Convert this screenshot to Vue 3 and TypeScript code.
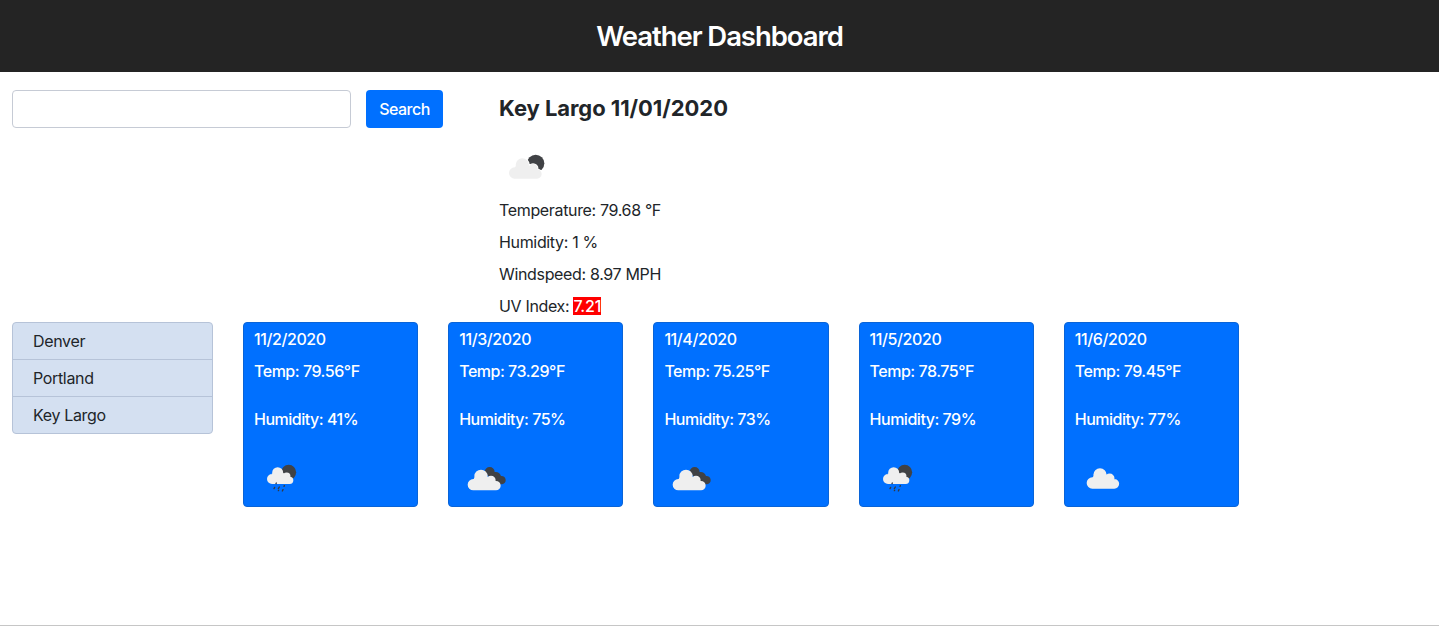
<script setup lang="ts">
type Icon = 'rain' | 'broken' | 'cloud'
interface Day { date: string; temp: string; humidity: number; icon: Icon }
type Puff = [x: number, y: number, r: number]

const cities: string[] = ['Denver', 'Portland', 'Key Largo']
const days: Day[] = [
  { date: '11/2/2020', temp: '79.56', humidity: 41, icon: 'rain' },
  { date: '11/3/2020', temp: '73.29', humidity: 75, icon: 'broken' },
  { date: '11/4/2020', temp: '75.25', humidity: 73, icon: 'broken' },
  { date: '11/5/2020', temp: '78.75', humidity: 79, icon: 'rain' },
  { date: '11/6/2020', temp: '79.45', humidity: 77, icon: 'cloud' },
]

// A cloud is a flat base between the first and last puff, with round puffs on top.
function cloud(puffs: Puff[]): string {
  const first = puffs[0]
  const last = puffs[puffs.length - 1]
  const bottom = first[1] + first[2]
  const circles = puffs.map(([x, y, r]) => `M${x - r} ${y}a${r} ${r} 0 1 1 ${2 * r} 0a${r} ${r} 0 1 1 ${-2 * r} 0Z`)
  return `${circles.join('')}M${first[0]} ${first[1] - 8}H${last[0]}V${bottom}H${first[0]}Z`
}

const fewCloud = cloud([[44, 84, 17], [67, 60, 20], [64, 72, 19], [78, 76, 17], [99, 71, 14], [111, 87, 14]])
const rainCloud = cloud([[51, 72, 15], [68, 53, 16.5], [65, 62, 16], [78, 68, 16], [95, 64, 11.5], [104, 76, 11]])
const brokenCloud = cloud([[40, 89, 17], [63, 64, 20], [60, 76, 19], [74, 80, 18], [93, 76, 14], [108, 92, 14]])
const plainCloud = cloud([[49, 84, 17], [72, 60, 20], [69, 72, 19], [83, 77, 17], [101, 70, 14.5], [115, 86.5, 14.5]])
</script>

<template>
  <div class="page">
    <header class="header"><h1>Weather Dashboard</h1></header>
    <section class="top">
      <form class="search" @submit.prevent>
        <input type="text" aria-label="City" />
        <button type="submit">Search</button>
      </form>
      <div class="current">
        <h2>Key Largo 11/01/2020</h2>
        <svg class="icon" viewBox="-3 -9 150 150">
          <circle class="dark" cx="107" cy="55" r="26" />
          <path class="cloud gap" :d="fewCloud" />
        </svg>
        <p>Temperature: 79.68 °F</p>
        <p>Humidity: 1 %</p>
        <p>Windspeed: 8.97 MPH</p>
        <p>UV Index: <span class="uv">7.21</span></p>
      </div>
    </section>
    <section class="bottom">
      <ul class="cities">
        <li v-for="city in cities" :key="city">{{ city }}</li>
      </ul>
      <div class="cards">
        <article v-for="day in days" :key="day.date" class="card">
          <p class="date">{{ day.date }}</p>
          <p class="temp">Temp: {{ day.temp }}°F</p>
          <p class="humidity">Humidity: {{ day.humidity }}%</p>
          <svg v-if="day.icon === 'rain'" class="icon" viewBox="-3 -3 150 150">
            <circle class="dark" cx="101" cy="52" r="22.5" />
            <path class="cloud" :d="rainCloud" />
            <path class="drops" d="m64 84-1 2M59 97l-2 4M73 96l-3 5M88 92l-1 2M71 106l-1 1M84 104l-2 4" />
          </svg>
          <svg v-else-if="day.icon === 'broken'" class="icon" viewBox="-3 -3 150 150">
            <path class="dark" d="M74 51a15 15 0 0 1 30 0q14-2 19 12a12.500 12.500 0 0 1 3 25h-20Z" />
            <path class="cloud" :d="brokenCloud" />
          </svg>
          <svg v-else class="icon" viewBox="-3 -3 150 150">
            <path class="cloud" :d="plainCloud" />
          </svg>
        </article>
      </div>
    </section>
  </div>
</template>

<style>
body { margin: 0; background: #fff; }
</style>

<style scoped>
* { box-sizing: border-box; }
.page {
  height: 626px;
  overflow: hidden;
  border-bottom: 1px solid #c6c6c6;
  font: 400 16px/24px Inter, "Liberation Sans", sans-serif;
  letter-spacing: -0.34px;
  color: #212529;
}
h1, h2, p, ul { margin: 0; padding: 0; }
.header {
  height: 72px;
  display: flex;
  align-items: center;
  justify-content: center;
  background: #242424;
  color: #fff;
}
h1 { font-size: 27.500px; line-height: 34px; font-weight: 600; letter-spacing: -1.07px; }
.top { display: flex; height: 250px; padding: 18px 12px 0; }
.search { display: flex; width: 487px; align-items: flex-start; gap: 15px; }
input {
  width: 339px;
  height: 38px;
  padding: 6px 12px;
  border: 1px solid #c6cbd5;
  border-radius: 4px;
  background: #fff;
  font: inherit;
}
button {
  width: 77px;
  height: 38px;
  padding: 0;
  border: 0;
  border-radius: 4px;
  background: #0070ff;
  color: #fff;
  font: inherit;
  font-weight: 500;
  letter-spacing: -0.5px;
}
h2 { height: 52px; font-size: 22px; line-height: 36px; font-weight: 700; letter-spacing: -0.06px; }
.icon { display: block; width: 50px; height: 50px; }
.cloud { fill: #efefef; }
.dark { fill: #404245; }
.drops { fill: none; stroke: #343a43; stroke-width: 4; stroke-linecap: round; }
.gap { stroke: #fff; stroke-width: 5; paint-order: stroke; }
.current .icon { margin-bottom: 6px; }
.current p { margin-bottom: 8px; white-space: nowrap; }
.uv { display: inline-block; line-height: 18px; background: #f00; color: #fff; font-weight: 500; letter-spacing: -0.2px; }
.bottom { display: flex; align-items: flex-start; gap: 30px; padding-left: 12px; }
.cities {
  width: 201px;
  list-style: none;
  border: 1px solid #b6c3d8;
  border-radius: 4px;
  background: #d4e0f1;
  overflow: hidden;
}
.cities li { height: 37px; padding: 6px 20px; }
.cities li + li { border-top: 1px solid #b6c3d8; }
.cities li:first-child { height: 36px; }
.cards { display: flex; gap: 30px; }
.card {
  width: 175.200px;
  height: 185px;
  padding: 4px 10px;
  border: 1px solid #0964d8;
  border-radius: 4px;
  background: #0070ff;
  color: #fff;
  font-weight: 500;
  letter-spacing: -0.48px;
  white-space: nowrap;
}
.date { letter-spacing: -0.4px; }
.temp { margin-top: 8px; }
.humidity { margin: 24px 0 23px; }
</style>
